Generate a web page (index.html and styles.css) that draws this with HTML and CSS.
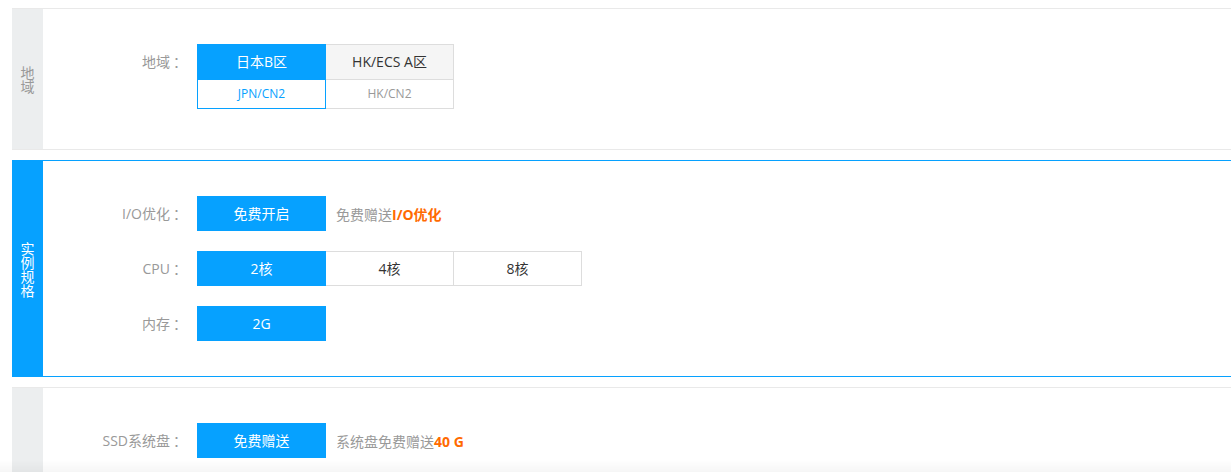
FILE: index.html
```html
<!DOCTYPE html>
<html lang="zh-CN">
<head>
    <meta http-equiv="content-type" content="text/html; charset=utf-8" />
    <title>云服务器配置</title>
    <link rel="stylesheet" href="styles.css">
</head>
<body>
<div class="page">

    <div class="panel">
        <div class="panel-side"><span>地域</span></div>
        <div class="panel-body panel-body-region">
            <div class="row">
                <label class="row-label">地域<span class="colon">：</span></label>
                <div class="options">
                    <div class="region active">
                        <div class="region-name">日本B区</div>
                        <div class="region-sub">JPN/CN2</div>
                    </div>
                    <div class="region">
                        <div class="region-name">HK/ECS A区</div>
                        <div class="region-sub">HK/CN2</div>
                    </div>
                </div>
            </div>
        </div>
    </div>

    <div class="panel panel-active">
        <div class="panel-side"><span>实例规格</span></div>
        <div class="panel-body">
            <div class="row">
                <label class="row-label">I/O优化<span class="colon">：</span></label>
                <div class="options">
                    <div class="btn active">免费开启</div>
                </div>
                <span class="note">免费赠送<b>I/O优化</b></span>
            </div>
            <div class="row">
                <label class="row-label">CPU<span class="colon">：</span></label>
                <div class="options">
                    <div class="btn active">2核</div>
                    <div class="btn">4核</div>
                    <div class="btn">8核</div>
                </div>
            </div>
            <div class="row">
                <label class="row-label">内存<span class="colon">：</span></label>
                <div class="options">
                    <div class="btn active">2G</div>
                </div>
            </div>
        </div>
    </div>

    <div class="panel">
        <div class="panel-side"><span></span></div>
        <div class="panel-body">
            <div class="row">
                <label class="row-label">SSD系统盘<span class="colon">：</span></label>
                <div class="options">
                    <div class="btn active">免费赠送</div>
                </div>
                <span class="note">系统盘免费赠送<b>40 G</b></span>
            </div>
        </div>
    </div>

</div>
<div class="bottom-shade"></div>
</body>
</html>
```

FILE: styles.css
```css
html, body {
    margin: 0;
    background: #fff;
    overflow: hidden;
}
body {
    font-family: "Open Sans", "Noto Sans CJK SC", sans-serif;
    font-size: 14px;
    color: #333;
}
.page {
    padding: 8px 0 0 12px;
}
.panel {
    display: flex;
    border-top: 1px solid #e9e9e9;
    border-bottom: 1px solid #e9e9e9;
    margin-bottom: 10px;
}
.panel-side {
    width: 31px;
    flex: none;
    background: #eceeef;
    color: #999;
    display: flex;
    align-items: center;
    justify-content: center;
}
.panel-side span {
    width: 14px;
    line-height: 14px;
    font-family: "Noto Sans CJK SC", sans-serif;
}
.panel-active {
    border-color: #06a1ff;
}
.panel-active .panel-side {
    background: #06a1ff;
    color: #fff;
}
.panel-body {
    flex: 1;
    padding: 35px 0;
    display: flex;
    flex-direction: column;
    gap: 20px;
}
.panel-body-region {
    padding-bottom: 40px;
}
.row {
    display: flex;
    align-items: center;
}
.panel-body-region .row {
    align-items: flex-start;
}
.row-label {
    width: 141px;
    margin-right: 13px;
    text-align: right;
    color: #999;
    line-height: 35px;
}
.colon {
    display: inline-block;
    width: 14px;
    text-align: center;
    text-indent: 3px;
}
.options {
    display: flex;
}

/* region cards */
.region {
    width: 127px;
    border: 1px solid #ddd;
    text-align: center;
    position: relative;
}
.region + .region,
.btn + .btn {
    margin-left: -1px;
}
.region-name {
    height: 34px;
    line-height: 34px;
    background: #f5f5f5;
    border-bottom: 1px solid #ddd;
    color: #333;
}
.region-sub {
    height: 28px;
    line-height: 28px;
    font-size: 12px;
    color: #999;
}
.region.active {
    border-color: #06a1ff;
    z-index: 1;
}
.region.active .region-name {
    background: #06a1ff;
    border-bottom-color: #06a1ff;
    color: #fff;
}
.region.active .region-sub {
    color: #06a1ff;
}

/* buttons */
.btn {
    width: 127px;
    height: 33px;
    line-height: 33px;
    border: 1px solid #ddd;
    text-align: center;
    background: #fff;
    color: #333;
    position: relative;
}
.btn.active {
    background: #06a1ff;
    border-color: #06a1ff;
    color: #fff;
    z-index: 1;
}
.note {
    margin-left: 10px;
    color: #999;
}
.note b {
    color: #ff6a00;
}

.bottom-shade {
    position: fixed;
    left: 0;
    right: 0;
    bottom: 0;
    height: 12px;
    background: linear-gradient(rgba(0, 0, 0, 0), rgba(0, 0, 0, 0.035));
}
```
